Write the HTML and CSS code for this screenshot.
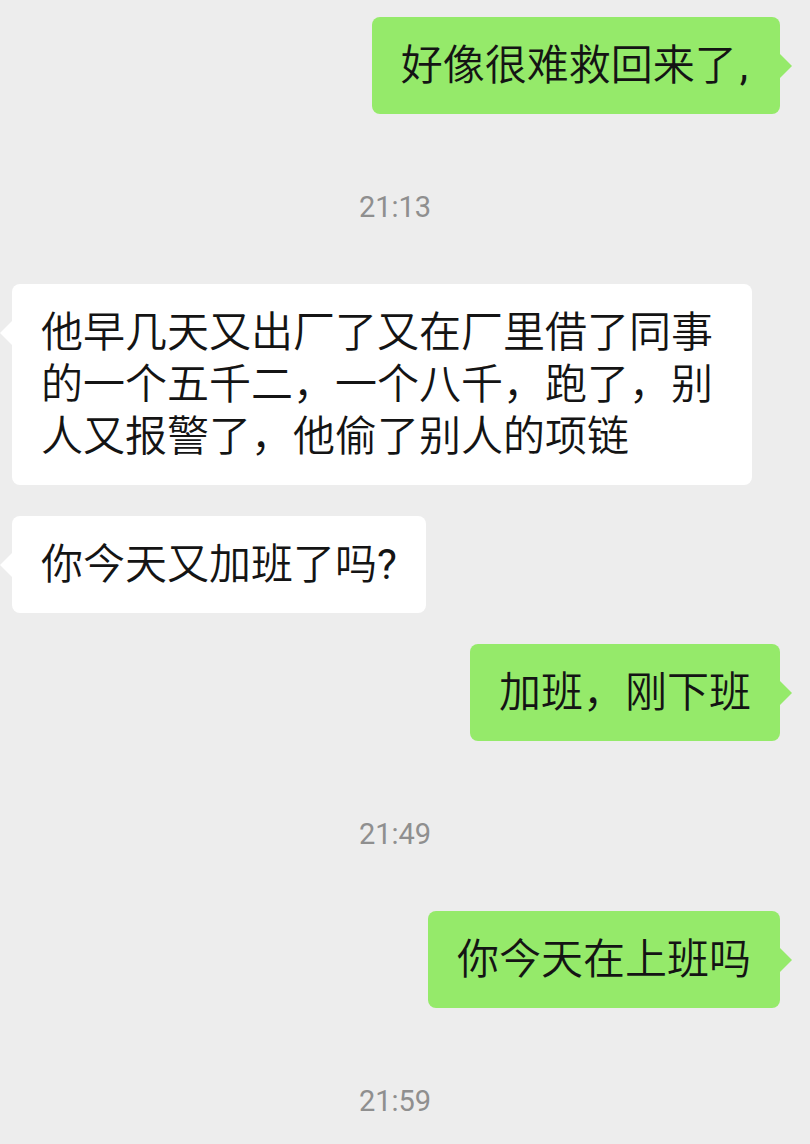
FILE: index.html
```html
<!DOCTYPE html>
<html lang="zh-CN">
<head>
<meta charset="utf-8">
<title>Chat</title>
<link rel="stylesheet" href="styles.css">
</head>
<body>
<main class="chat">
  <div class="row row-me"><div class="bubble bubble-me">好像很难救回来了<span class="latin punct">,</span></div></div>
  <div class="time">21:13</div>
  <div class="row row-other"><div class="bubble bubble-other">他早几天又出厂了又在厂里借了同事的一个五千二，一个八千，跑了，别人又报警了，他偷了别人的项链</div></div>
  <div class="row row-other"><div class="bubble bubble-other">你今天又加班了吗<span class="latin">?</span></div></div>
  <div class="row row-me"><div class="bubble bubble-me">加班，刚下班</div></div>
  <div class="time">21:49</div>
  <div class="row row-me"><div class="bubble bubble-me">你今天在上班吗</div></div>
  <div class="time">21:59</div>
</main>
</body>
</html>
```

FILE: styles.css
```css
html, body {
  margin: 0;
  padding: 0;
  background: #ededed;
}

body {
  width: 810px;
  height: 1144px;
  overflow: hidden;
  font-family: Roboto, "Noto Sans CJK SC", sans-serif;
}

.chat {
  display: flex;
  flex-direction: column;
  gap: 31px;
  padding-top: 17px;
}

.row {
  display: flex;
}

.row-me {
  justify-content: flex-end;
  padding-right: 30px;
}

.row-other {
  justify-content: flex-start;
  padding-left: 12px;
}

.bubble {
  position: relative;
  box-sizing: border-box;
  max-width: 740px;
  padding: 22.5px 29px;
  border-radius: 8px;
  font-size: 42px;
  font-weight: 350;
  line-height: 52px;
  color: #141414;
  word-break: break-all;
}

.latin {
  font-weight: 400;
}

.punct {
  margin-left: 3px;
  margin-right: 3px;
}

.bubble-me {
  background: #95ea6a;
}

.bubble-other {
  background: #ffffff;
}

.bubble::after {
  content: "";
  position: absolute;
  top: 37px;
  width: 0;
  height: 0;
  border-top: 12px solid transparent;
  border-bottom: 12px solid transparent;
}

.bubble-me::after {
  right: -12px;
  border-left: 12px solid #95ea6a;
}

.bubble-other::after {
  left: -12px;
  border-right: 12px solid #ffffff;
}

.time {
  margin: 42px 0 26px;
  padding-right: 20px;
  height: 40px;
  line-height: 40px;
  text-align: center;
  font-family: Roboto, sans-serif;
  font-size: 29px;
  color: #8f8f8f;
}
```
